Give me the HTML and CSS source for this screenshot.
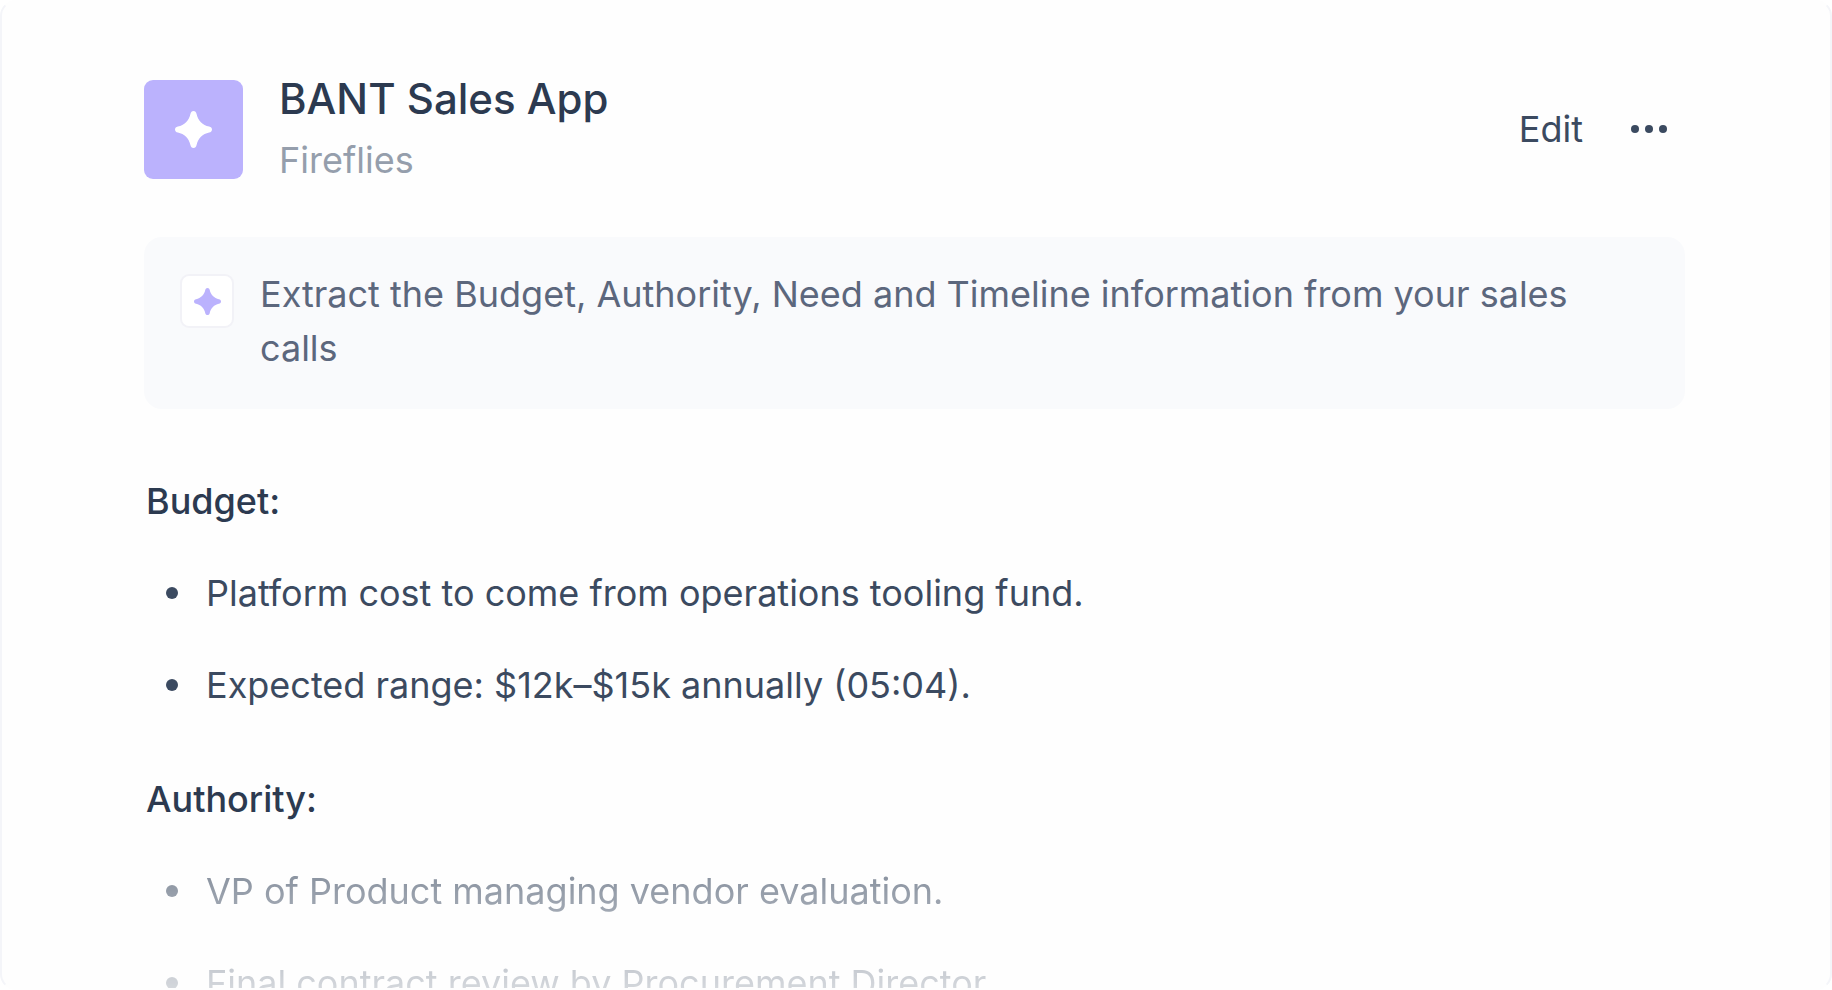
FILE: index.html
```html
<!DOCTYPE html>
<html lang="en">
  <head>
    <meta charset="UTF-8" />
    <title>BANT Sales App</title>
    <link rel="stylesheet" href="styles.css">
  </head>
  <body>
    <main class="card">
      <header class="app-header">
        <div class="app-icon">
          <svg viewBox="0 0 36 36" width="37" height="37" fill="currentColor" aria-hidden="true">
            <path d="M18 0C19.6 0 20.6 1 21 2.8C22.2 9 27 13.8 33.2 15C35 15.4 36 16.4 36 18C36 19.6 35 20.6 33.2 21C27 22.2 22.2 27 21 33.2C20.6 35 19.6 36 18 36C16.4 36 15.4 35 15 33.2C13.8 27 9 22.2 2.8 21C1 20.6 0 19.6 0 18C0 16.4 1 15.4 2.8 15C9 13.8 13.8 9 15 2.8C15.4 1 16.4 0 18 0Z" />
          </svg>
        </div>
        <div class="app-info">
          <h1>BANT Sales App</h1>
          <p>Fireflies</p>
        </div>
        <div class="actions">
          <button type="button" class="edit-btn">Edit</button>
          <button type="button" class="more-btn" aria-label="More options">
            <svg viewBox="0 0 36 8" width="36" height="8" fill="currentColor" aria-hidden="true">
              <circle cx="4" cy="4" r="4" />
              <circle cx="18" cy="4" r="4" />
              <circle cx="32" cy="4" r="4" />
            </svg>
          </button>
        </div>
      </header>

      <div class="prompt">
        <div class="prompt-icon">
          <svg viewBox="0 0 36 36" width="27" height="27" fill="currentColor" aria-hidden="true">
            <path d="M18 0C19.6 0 20.6 1 21 2.8C22.2 9 27 13.8 33.2 15C35 15.4 36 16.4 36 18C36 19.6 35 20.6 33.2 21C27 22.2 22.2 27 21 33.2C20.6 35 19.6 36 18 36C16.4 36 15.4 35 15 33.2C13.8 27 9 22.2 2.8 21C1 20.6 0 19.6 0 18C0 16.4 1 15.4 2.8 15C9 13.8 13.8 9 15 2.8C15.4 1 16.4 0 18 0Z" />
          </svg>
        </div>
        <p>Extract the Budget, Authority, Need and Timeline information from your sales calls</p>
      </div>

      <section class="notes">
        <h2>Budget:</h2>
        <ul>
          <li>Platform cost to come from operations tooling fund.</li>
          <li>Expected range: $12k–$15k annually (05:04).</li>
        </ul>
      </section>

      <section class="notes">
        <h2>Authority:</h2>
        <ul class="fade">
          <li>VP of Product managing vendor evaluation.</li>
          <li>Final contract review by Procurement Director.</li>
        </ul>
      </section>
    </main>
  </body>
</html>
```
FILE: styles.css
```css
* {
  box-sizing: border-box;
}
body {
  margin: 0;
  background: #ffffff;
  color: #3b4a60;
  font-family: Inter, "Liberation Sans", sans-serif;
  font-size: 36px;
  line-height: 54px;
}
h1,
h2,
p,
ul {
  margin: 0;
  padding: 0;
}
.card {
  height: 100vh;
  padding: 69px 145px 0 142px;
  overflow: hidden;
  background: #fefefe;
  border: 2px solid #f4f5f9;
  border-top-color: #fefefe;
  border-bottom-color: #fefefe;
  border-radius: 16px;
}
.app-header {
  display: flex;
  align-items: center;
  gap: 36px;
  padding-right: 18px;
}
.app-icon {
  display: flex;
  justify-content: center;
  align-items: center;
  width: 99px;
  height: 99px;
  background: #bbb2fd;
  border-radius: 9px;
  color: #ffffff;
}
.app-info {
  flex: 1;
}
.app-info h1 {
  color: #2c3a50;
  font-size: 42px;
  line-height: 56px;
  font-weight: 500;
}
.app-info p {
  margin-top: 6px;
  color: #959eac;
}
.actions {
  display: flex;
  align-items: center;
  gap: 48px;
}
.actions button {
  display: flex;
  align-items: center;
  padding: 0;
  border: none;
  background: none;
  color: #3b4a60;
  font: inherit;
  cursor: pointer;
}
.prompt {
  display: flex;
  align-items: flex-start;
  gap: 26px;
  margin-top: 50px;
  padding: 30px 36px 34px;
  background: #f9fafc;
  border-radius: 18px;
  color: #5c677d;
}
.prompt-icon {
  display: flex;
  flex-shrink: 0;
  justify-content: center;
  align-items: center;
  width: 54px;
  height: 54px;
  margin-top: 7px;
  background: #ffffff;
  border: 2px solid #f2f2f7;
  border-radius: 9px;
  color: #bbb2fd;
}
.notes {
  margin-top: 60px;
  padding-left: 2px;
}
.prompt + .notes {
  margin-top: 65px;
}
.notes h2 {
  color: #2c3a50;
  font-size: 36px;
  font-weight: 500;
}
.notes ul {
  list-style: none;
}
.notes li {
  display: flex;
  align-items: center;
  gap: 28px;
  padding: 38px 0 0 20px;
}
.notes li::before {
  content: "";
  width: 12px;
  height: 12px;
  background: currentColor;
  border-radius: 50%;
}
/* the last list fades out towards the bottom of the card */
.fade {
  mask-image: linear-gradient(rgba(0, 0, 0, 0.76), rgba(0, 0, 0, 0.14));
}
```
